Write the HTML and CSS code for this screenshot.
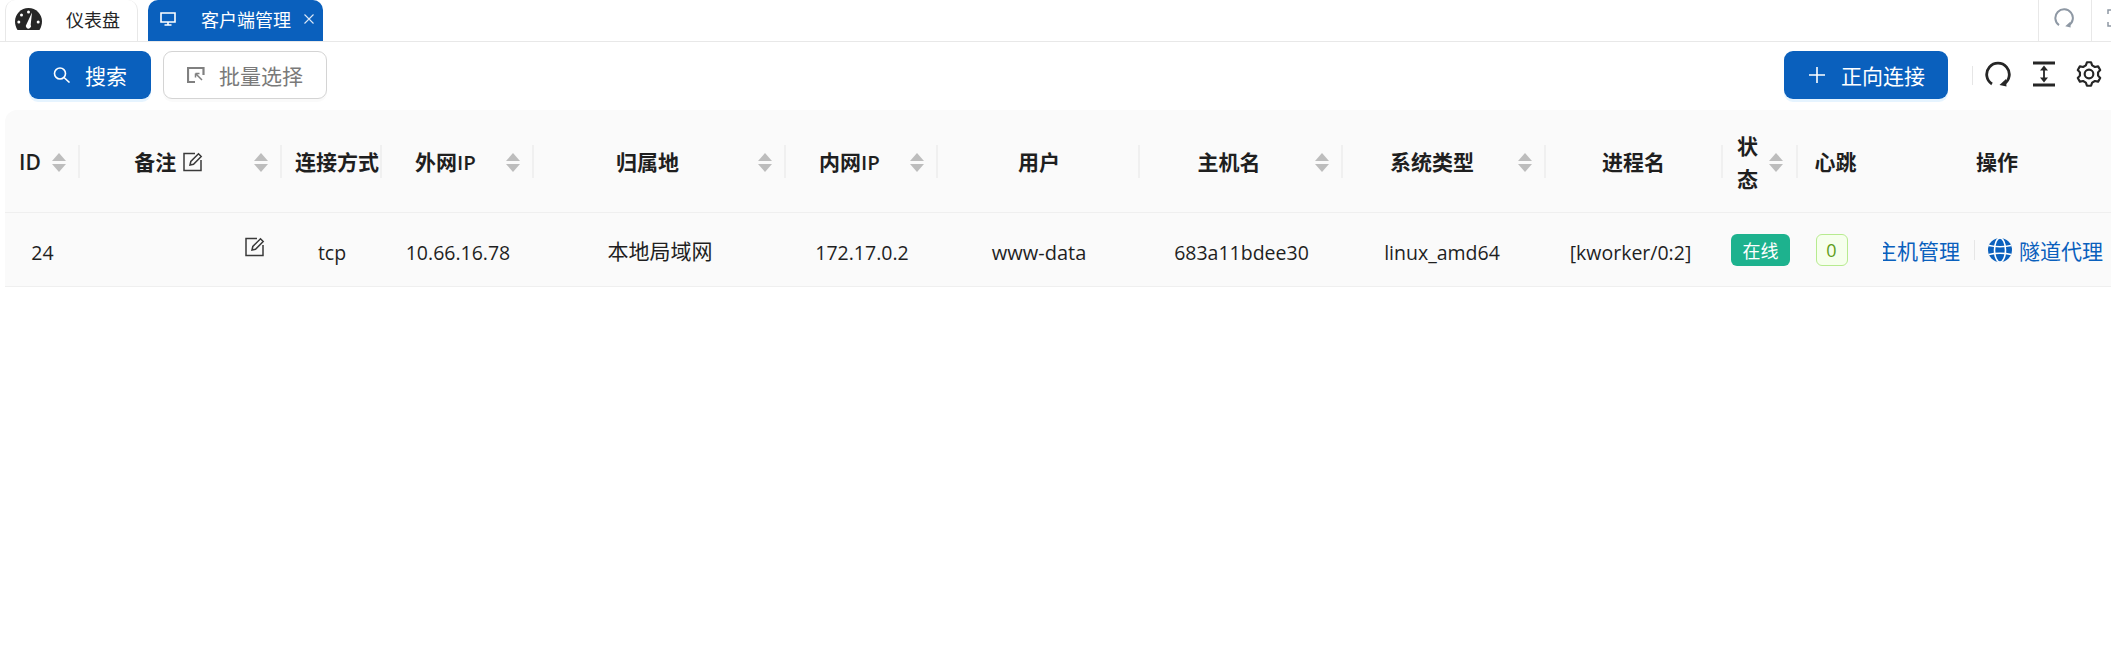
FILE: index.html
```html
<!DOCTYPE html>
<html lang="zh-CN">
<head>
<meta charset="utf-8">
<title>客户端管理</title>
<link rel="stylesheet" href="styles.css">
</head>
<body>
<nav class="tabs">
  <div class="tab">
    <svg class="tab-gauge" viewBox="0 0 27 22"><path class="fill-dark" d="M13.5 0C6 0 0 6 0 13.5c0 3 .9 5.800 2.500 8.500h22c1.600-2.700 2.500-5.500 2.500-8.500C27 6 21 0 13.500 0z"/><circle class="fill-white" cx="13.500" cy="4" r="1.500"/><circle class="fill-white" cx="6.500" cy="7" r="1.500"/><circle class="fill-white" cx="3.800" cy="14" r="1.500"/><circle class="fill-white" cx="23.200" cy="14" r="1.500"/><path class="fill-white" d="M17 4.500l-1.300 12.200a2.600 2.600 0 1 1-4.200-.400z"/></svg>
    <span>仪表盘</span>
  </div>
  <div class="tab tab-active">
    <svg class="tab-monitor" viewBox="0 0 16 14"><path class="line-white" d="M1 1h14v9H1zM8 10v3M4.500 13h7"/></svg>
    <span>客户端管理</span>
    <svg class="tab-close" viewBox="0 0 10 10"><path class="line-close" d="M.5.5l9 9M9.500.5l-9 9"/></svg>
  </div>
  <div class="tab-tools">
    <div class="tab-tool">
      <svg class="tool-reload-small" viewBox="0 0 24 24"><path class="line-gray" d="M6 20.500A10.500 10.500 0 1 1 17.500 21"/><path class="fill-gray" d="M19.500 16.500l.5 7-6.500-1.500z"/></svg>
    </div>
    <div class="tab-tool">
      <svg class="tool-full" viewBox="0 0 20 18"><path class="line-gray-thin" d="M5 1H1v4M5 17H1v-4M15 1h4v4M15 17h4v-4M6 5h8v8H6z"/></svg>
    </div>
  </div>
</nav>

<section class="toolbar">
  <div class="toolbar-group">
    <button class="btn btn-primary btn-search">
      <svg class="btn-icon" viewBox="0 0 18 16"><circle class="line-white" cx="7" cy="6.500" r="5.500"/><path class="line-white" d="M11 10.500l5.500 5"/></svg>
      <span>搜索</span>
    </button>
    <button class="btn btn-default">
      <svg class="btn-icon" viewBox="0 0 18 16"><path class="line-muted" d="M16.500 8V1H1v14h7"/><path class="line-muted-thin" d="M9 7l6 6M8.500 6.500h4M8.500 6.500v4"/></svg>
      <span>批量选择</span>
    </button>
  </div>
  <div class="toolbar-group toolbar-right">
    <button class="btn btn-primary btn-new">
      <svg class="btn-icon btn-plus" viewBox="0 0 16 16"><path class="line-white" d="M8 0v16M0 8h16"/></svg>
      <span>正向连接</span>
    </button>
    <i class="toolbar-divider"></i>
    <svg class="tool tool-reload" viewBox="0 0 26 26"><path class="line-dark" d="M7 23A11.300 11.300 0 1 1 19 23"/><path class="fill-dark" d="M21 18l.500 7.500-7-1.500z"/></svg>
    <svg class="tool tool-height" viewBox="0 0 22 26"><path class="line-dark" d="M0 2h22M0 24h22"/><path class="line-dark-thin" d="M11 6v14"/><path class="fill-dark" d="M11 4.500l4 5H7zM11 21.500l4-5H7z"/></svg>
    <svg class="tool tool-gear" viewBox="0 0 24 24"><path class="line-gear" d="M9.090 4.010L10.090 1.170H13.910L14.910 4.010L17.460 5.490L20.430 4.930L22.340 8.240L20.370 10.520V13.480L22.340 15.760L20.430 19.070L17.460 18.510L14.910 19.990L13.910 22.830H10.090L9.090 19.990L6.540 18.510L3.570 19.070L1.660 15.760L3.630 13.480V10.520L1.660 8.240L3.570 4.930L6.540 5.490z"/><circle class="line-gear" cx="12" cy="12" r="4"/></svg>
  </div>
</section>

<div class="table-wrap">
  <table class="grid">
    <thead>
      <tr>
        <th class="c-id sep"><div class="th-in"><span class="th-title latin th-id">ID</span><i class="sorter"></i></div></th>
        <th class="c-note sep"><div class="th-in"><span class="th-title">备注 <svg class="edit edit-head" viewBox="0 0 20 20"><path class="line-edit" d="M12 1.500H1v17h17V8"/><path class="line-edit" d="M7 13l.8-3.500L15.500 1.800l2.700 2.700-7.700 7.700z"/></svg></span><i class="sorter"></i></div></th>
        <th class="c-conn sep"><span class="th-nowrap">连接方式</span></th>
        <th class="c-wan sep"><div class="th-in"><span class="th-title">外网<span class="latin">IP</span></span><i class="sorter"></i></div></th>
        <th class="c-geo sep"><div class="th-in"><span class="th-title">归属地</span><i class="sorter"></i></div></th>
        <th class="c-lan sep"><div class="th-in"><span class="th-title">内网<span class="latin">IP</span></span><i class="sorter"></i></div></th>
        <th class="c-user sep">用户</th>
        <th class="c-host sep"><div class="th-in"><span class="th-title">主机名</span><i class="sorter"></i></div></th>
        <th class="c-os sep"><div class="th-in"><span class="th-title">系统类型</span><i class="sorter"></i></div></th>
        <th class="c-proc sep">进程名</th>
        <th class="c-state sep"><div class="th-in"><span class="th-title th-wrap">状态</span><i class="sorter"></i></div></th>
        <th class="c-beat">心跳</th>
        <th class="c-ops">操作</th>
      </tr>
    </thead>
    <tbody>
      <tr>
        <td class="latin">24</td>
        <td class="td-note"><svg class="edit edit-row" viewBox="0 0 20 20"><path class="line-edit" d="M12 1.500H1v17h17V8"/><path class="line-edit" d="M7 13l.8-3.500L15.500 1.800l2.700 2.700-7.700 7.700z"/></svg></td>
        <td class="latin">tcp</td>
        <td class="latin">10.66.16.78</td>
        <td>本地局域网</td>
        <td class="latin">172.17.0.2</td>
        <td class="latin td-user">www-data</td>
        <td class="latin">683a11bdee30</td>
        <td class="latin td-os">linux_amd64</td>
        <td class="latin td-proc">[kworker/0:2]</td>
        <td class="td-tag"><span class="tag tag-online">在线</span></td>
        <td class="td-tag td-beat"><span class="tag tag-beat">0</span></td>
        <td class="td-ops">
          <div class="ops">
            <a class="op">主机管理</a>
            <i class="op-divider"></i>
            <a class="op op-tunnel">
              <svg class="globe" viewBox="0 0 24 24"><circle class="globe-bg" cx="12" cy="12" r="12"/><ellipse class="globe-line" cx="12" cy="12" rx="5.500" ry="12"/><path class="globe-line" d="M1 7.500c6 1.500 16 1.500 22 0M1 16.500c6-1.500 16-1.500 22 0"/></svg>
              <span>隧道代理</span>
            </a>
          </div>
        </td>
      </tr>
    </tbody>
  </table>
</div>
</body>
</html>
```

FILE: styles.css
```css
* { box-sizing: border-box; }
html, body { margin: 0; padding: 0; height: 100%; background: #fff; overflow: hidden; }
body {
  font-family: "Open Sans", "Noto Sans CJK SC", sans-serif;
  font-size: 21px;
  color: #1f1f1f;
}

/* tab bar */
.tabs {
  display: flex;
  align-items: flex-end;
  gap: 10px;
  height: 42px;
  padding-left: 5px;
  border-bottom: 1px solid #e8e8e8;
}
.tab {
  display: flex;
  align-items: center;
  flex: none;
  width: 133px;
  height: 41px;
  padding: 0 0 3px 9px;
  font-size: 18px;
  color: #262626;
  background: #fff;
  border: 1px solid #e8e8e8;
  border-top: 0;
  border-bottom: 0;
  border-top-left-radius: 10px;
  border-top-right-radius: 10px;
}
.tab-gauge { width: 27px; height: 22px; margin-right: 24px; }
.tab-active {
  width: 175px;
  padding-left: 12px;
  color: #fff;
  background: #0a60bd;
  border: 0;
}
.tab-monitor { width: 16px; height: 14px; margin: -1px 25px 0 0; }
.tab-close { width: 10px; height: 10px; margin-left: 13px; }
.tab-tools { display: flex; flex: none; margin-left: auto; margin-right: -33px; }
.tab-tool {
  display: flex;
  align-items: center;
  width: 53px;
  height: 41px;
  padding-left: 15px;
  border-left: 1px solid #e8e8e8;
}
.tool-reload-small { width: 20px; height: 20px; margin-top: -5px; }
.tool-full { width: 20px; height: 18px; margin-top: -5px; }

/* svg paints */
.fill-dark { fill: #262626; }
.fill-white { fill: #fff; }
.fill-gray { fill: #8e98a4; }
.line-white, .line-gray, .line-gray-thin, .line-dark, .line-dark-thin, .line-muted, .line-muted-thin, .line-close, .line-gear, .line-edit { fill: none; }
.line-white { stroke: #fff; stroke-width: 1.6; }
.line-close { stroke: #dce8f6; stroke-width: 1.1; }
.line-gray { stroke: #8e98a4; stroke-width: 2.400; }
.line-gray-thin { stroke: #8e98a4; stroke-width: 1.500; }
.line-dark { stroke: #262626; stroke-width: 2.800; }
.line-dark-thin { stroke: #262626; stroke-width: 1.800; }
.line-muted { stroke: #808080; stroke-width: 2.200; }
.line-muted-thin { stroke: #808080; stroke-width: 1.500; }
.line-gear { stroke: #262626; stroke-width: 2; stroke-linejoin: round; }
.line-edit { stroke: #3a3a3a; stroke-width: 1.500; }

/* toolbar */
.toolbar {
  display: flex;
  justify-content: space-between;
  align-items: center;
  height: 48px;
  margin: 9px 0 11px;
  padding: 0 9px 0 29px;
}
.toolbar-group { display: flex; align-items: center; gap: 12px; }
.toolbar-right { gap: 0; }
.btn {
  display: flex;
  align-items: center;
  justify-content: center;
  gap: 14px;
  width: 164px;
  height: 48px;
  padding: 0;
  font: inherit;
  border-radius: 9px;
}
.btn-icon { width: 18px; height: 16px; }
.btn-primary {
  color: #fff;
  background: #0a60bd;
  border: 0;
  box-shadow: 0 3px 0 rgba(5, 145, 255, 0.1);
}
.btn-default {
  color: #7a7a7a;
  background: #fff;
  border: 1.5px solid #d4d4d4;
  box-shadow: 0 3px 0 rgba(0, 0, 0, 0.02);
}
.btn-search { width: 122px; }
.btn-new { gap: 16px; padding-left: 2px; }
.btn-plus { width: 16px; }
.toolbar-divider {
  width: 1px;
  height: 19px;
  margin: 0 12px 0 24px;
  background: #e6e6e6;
}
.tool { flex: none; margin-top: -2px; }
.tool-reload { width: 26px; height: 26px; }
.tool-height { width: 22px; height: 26px; margin-left: 22px; }
.tool-gear { width: 26px; height: 26px; margin-left: 21px; }

/* table */
.table-wrap {
  margin-left: 5px;
  overflow: hidden;
  border-top-left-radius: 12px;
}
.grid {
  width: 2118px;
  table-layout: fixed;
  border-collapse: separate;
  border-spacing: 0;
  background: #fafafa;
}
.grid th {
  position: relative;
  height: 103px;
  padding: 3px 14px 0;
  font-weight: 700;
  line-height: 33px;
  text-align: center;
  border-bottom: 1px solid #efefef;
}
.grid td {
  height: 74px;
  padding: 0;
  text-align: center;
  border-bottom: 1px solid #efefef;
}
.grid td.latin { padding-top: 5px; font-size: 19.5px; font-weight: 400; }
.grid td.td-user { font-size: 20px; }
.grid td.td-os { padding-right: 5px; }
.grid td.td-proc { padding-right: 8px; }
.latin { font-size: 20.5px; font-weight: 600; }
.th-id { font-size: 21px; }
.sep::before {
  content: "";
  position: absolute;
  top: 35px;
  right: 0;
  width: 2px;
  height: 33px;
  background: #f0f0f0;
}
.c-id { width: 75px; }
.c-note { width: 202px; }
.c-conn { width: 100px; }
.c-wan { width: 152px; }
.c-geo { width: 252px; }
.c-lan { width: 152px; }
.c-user { width: 202px; }
.c-host { width: 203px; }
.c-os { width: 203px; }
.grid .c-proc { width: 177px; padding-right: 16px; }
.c-state { width: 75px; }
.c-beat { width: 75px; }
.grid .c-ops { width: 250px; padding-right: 16px; }

.th-in { display: flex; align-items: center; }
.th-title { flex: 1; min-width: 0; }
.th-wrap { text-align: left; width: 21px; flex: none; word-break: break-all; }
.th-nowrap { display: block; margin: 0 -14px 0 -1px; white-space: nowrap; text-align: left; }
.sorter {
  position: relative;
  flex: none;
  width: 14px;
  height: 19px;
  margin-left: 11px;
}
.sorter::before, .sorter::after {
  content: "";
  position: absolute;
  left: 0;
  border-left: 7px solid transparent;
  border-right: 7px solid transparent;
}
.sorter::before { top: 0; border-bottom: 8px solid #bdbdbd; }
.sorter::after { bottom: 0; border-top: 8px solid #bdbdbd; }
.edit { vertical-align: -2px; }
.edit-head { width: 20px; height: 20px; margin-left: 1px; }
.edit-row { display: block; width: 20px; height: 20px; margin: -6px 17px 0 auto; }
.tag {
  display: inline-flex;
  align-items: center;
  justify-content: center;
  height: 32px;
  border-radius: 6px;
  font-size: 18px;
  vertical-align: middle;
}
.tag-online { width: 59px; color: #fff; background: #1db28e; }
.tag-beat { width: 32px; color: #5f9e1a; background: #f6ffed; border: 1.5px solid #b7eb8f; }
.grid .td-beat { padding-right: 8px; }
.ops {
  display: flex;
  align-items: center;
  justify-content: flex-end;
  margin-left: 10px;
  padding-right: 20px;
  overflow: hidden;
  color: #0a60bd;
}
.op { display: flex; flex: none; align-items: center; gap: 7px; }
.op-divider {
  flex: none;
  width: 1px;
  height: 20px;
  margin: 0 13px 0 14px;
  background: #e6e6e6;
}
.globe { width: 24px; height: 24px; }
.globe-bg { fill: #0a60bd; }
.globe-line { fill: none; stroke: #fff; stroke-width: 1.600; }
```
